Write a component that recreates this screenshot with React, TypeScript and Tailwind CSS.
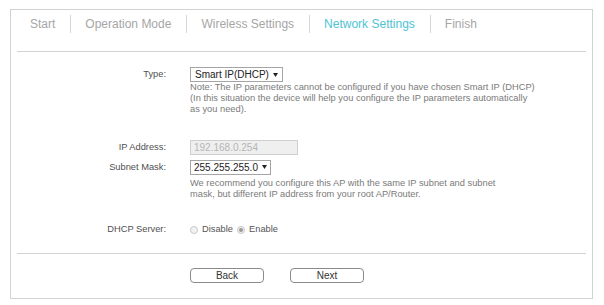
import React from "react";

const Sep = () => <div className="w-px h-[18px] bg-[#d6d6d6] ml-[15px] mr-[14px]" />;

const Caret = () => (
  <svg width="5" height="4" viewBox="0 0 5 4" className="ml-[4px]">
    <path d="M0 0 L5 0 L2.5 4 Z" fill="#222" />
  </svg>
);

const Radio = ({ checked }: { checked?: boolean }) => (
  <span className="w-[8px] h-[8px] rounded-full border border-[#c8c8c8] bg-[#f2f2f2] flex items-center justify-center">
    {checked && <span className="w-[4px] h-[4px] rounded-full bg-[#9a9a9a]" />}
  </span>
);

export default function App() {
  return (
    <div
      className="w-[604px] h-[305px] bg-white overflow-hidden"
      style={{ fontFamily: '"Liberation Sans", Arial, sans-serif' }}
    >
      <div className="ml-[10px] mt-[9px] w-[583px] h-[290px] border border-[#d2d2d2] px-[6px] flex flex-col">
        {/* Tabs */}
        <div className="h-[42px] border-b border-[#d2d2d2] pl-[13px] pt-[5px]">
          <div className="flex items-center h-[18px] text-[12px] text-[#a6a6a6] leading-[14px]">
            <span>Start</span>
            <Sep />
            <span>Operation Mode</span>
            <Sep />
            <span>Wireless Settings</span>
            <Sep />
            <span className="text-[#4ec3d4]">Network Settings</span>
            <Sep />
            <span>Finish</span>
          </div>
        </div>

        {/* Body */}
        <div className="flex flex-col text-[9.3px] text-[#505050]">
          {/* Type */}
          <div className="flex mt-[15px]">
            <div className="w-[149px] text-right h-[15px] leading-[15px]">Type:</div>
            <div className="ml-[24px] flex flex-col">
              <div className="w-[93px] h-[15px] border border-[#a5a5a5] bg-white flex items-center pl-[4px] text-[10px] text-[#222]">
                <span>Smart IP(DHCP)</span>
                <Caret />
              </div>
              <div className="leading-[11.2px] text-[#7a7a7a] whitespace-nowrap">
                Note: The IP parameters cannot be configured if you have chosen Smart IP (DHCP)
                <br />
                (In this situation the device will help you configure the IP parameters automatically
                <br />
                as you need).
              </div>
            </div>
          </div>

          {/* IP Address */}
          <div className="flex mt-[24px]">
            <div className="w-[149px] text-right h-[15px] leading-[15px]">IP Address:</div>
            <div className="ml-[24px] w-[108px] h-[15px] border border-[#cfcfcf] bg-[#efefef] flex items-center pl-[3px] text-[10px] text-[#b5b5b5]">
              192.168.0.254
            </div>
          </div>

          {/* Subnet Mask */}
          <div className="flex mt-[5px]">
            <div className="w-[149px] text-right h-[15px] leading-[15px]">Subnet Mask:</div>
            <div className="ml-[24px] flex flex-col">
              <div className="w-[81px] h-[15px] border border-[#a5a5a5] bg-white flex items-center pl-[3px] text-[10px] text-[#222]">
                <span>255.255.255.0</span>
                <Caret />
              </div>
              <div className="mt-[3px] leading-[11.2px] text-[#7a7a7a] whitespace-nowrap">
                We recommend you configure this AP with the same IP subnet and subnet
                <br />
                mask, but different IP address from your root AP/Router.
              </div>
            </div>
          </div>

          {/* DHCP Server */}
          <div className="flex mt-[24px] items-center h-[12px]">
            <div className="w-[149px] text-right">DHCP Server:</div>
            <div className="ml-[24px] flex items-center text-[#555]">
              <Radio />
              <span className="ml-[4px]">Disable</span>
              <span className="ml-[4px]"><Radio checked /></span>
              <span className="ml-[4px]">Enable</span>
            </div>
          </div>
        </div>

        <div className="flex-1" />

        {/* Footer */}
        <div className="border-t border-[#d2d2d2] h-[45px] flex pt-[14px] pl-[173px]">
          <button className="w-[74px] h-[15px] border border-[#8a8a8a] rounded-[4px] bg-white text-[10px] text-[#333] leading-[13px]">
            Back
          </button>
          <button className="ml-[26px] w-[74px] h-[15px] border border-[#8a8a8a] rounded-[4px] bg-white text-[10px] text-[#333] leading-[13px]">
            Next
          </button>
        </div>
      </div>
    </div>
  );
}
